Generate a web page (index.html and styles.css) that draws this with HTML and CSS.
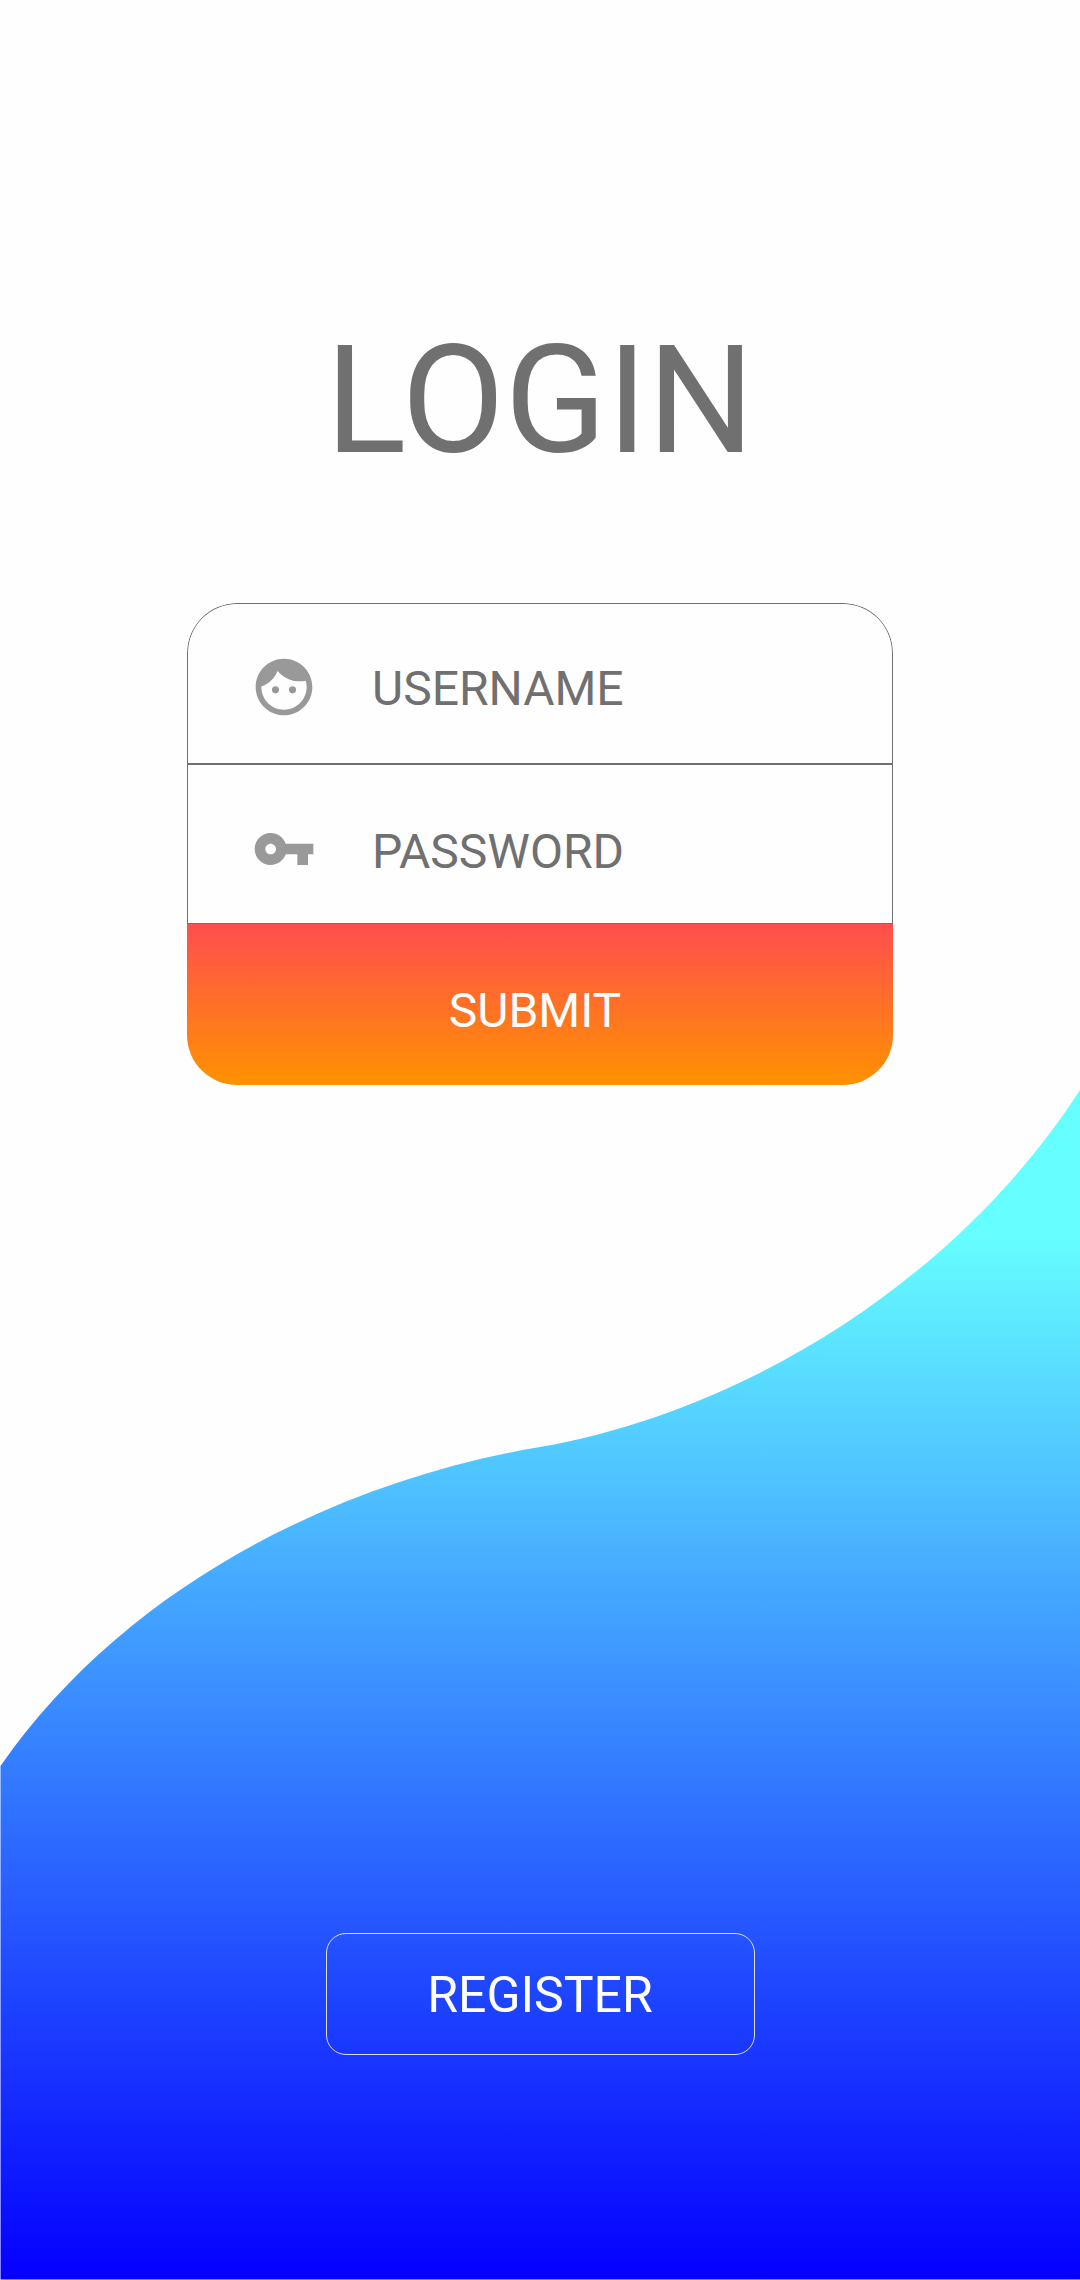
FILE: index.html
```html
<!DOCTYPE html>
<html lang="en">
<head>
  <meta charset="utf-8">
  <meta name="viewport" content="width=device-width, initial-scale=1">
  <title>Login</title>
  <link rel="stylesheet" href="styles.css">
</head>
<body>
  <main class="page">
    <svg class="wave" viewBox="0 0 1080 1190" preserveAspectRatio="none" aria-hidden="true">
      <defs>
        <linearGradient id="sea" gradientUnits="userSpaceOnUse" x1="0" y1="140" x2="0" y2="1188">
          <stop offset="0" stop-color="#66ffff"/>
          <stop offset="1" stop-color="#0400ff"/>
        </linearGradient>
      </defs>
      <path fill="url(#sea)" d="M.5 676C125 497 335 392 540 357C750 320 960 186 1080 0V1189.500H.5Z"/>
    </svg>

    <h1 class="title">LOGIN</h1>

    <form class="card">
      <label class="field field-user">
        <svg class="icon" viewBox="0 0 24 24" aria-hidden="true">
          <path d="M10.25 13a1.25 1.25 0 1 1-2.5 0 1.25 1.25 0 0 1 2.5 0zM15 11.75a1.25 1.25 0 1 0 0 2.5 1.25 1.25 0 0 0 0-2.5zM22 12c0 5.52-4.48 10-10 10S2 17.52 2 12 6.48 2 12 2s10 4.480 10 10zM20 12c0-.78-.12-1.530-.33-2.240-.7.150-1.420.240-2.170.240-3.130 0-5.920-1.440-7.760-3.690C8.690 8.870 6.600 10.880 4 11.860c.010.040 0 .090 0 .140 0 4.410 3.590 8 8 8s8-3.590 8-8z"/>
        </svg>
        <input class="input" type="text" name="username" placeholder="USERNAME" aria-label="Username">
      </label>
      <label class="field field-pass">
        <svg class="icon icon-key" viewBox="0 0 24 24" aria-hidden="true">
          <path d="M12.650 10C11.830 7.670 9.610 6 7 6c-3.310 0-6 2.690-6 6s2.690 6 6 6c2.610 0 4.830-1.670 5.650-4H17v4h4v-4h2v-4H12.650zM7 14c-1.100 0-2-.9-2-2s.9-2 2-2 2 .9 2 2-.9 2-2 2z"/>
        </svg>
        <input class="input" type="password" name="password" placeholder="PASSWORD" aria-label="Password">
      </label>
      <button class="submit" type="submit">SUBMIT</button>
    </form>

    <button class="register" type="button">REGISTER</button>
  </main>
</body>
</html>
```

FILE: styles.css
```css
* {
  box-sizing: border-box;
}

body {
  margin: 0;
  background: #fefefe;
  color: #707070;
  font-family: Roboto, sans-serif;
}

.page {
  position: relative;
  display: flex;
  flex-direction: column;
  align-items: center;
  min-height: 100vh;
  padding: 313px 24px 225px;
}

.wave {
  position: absolute;
  bottom: 0;
  left: 0;
  z-index: -1;
  width: 100%;
  aspect-ratio: 1080 / 1190;
}

.title {
  margin: 0 0 114px;
  font-size: 150px;
  font-weight: 400;
  line-height: 176px;
}

.card {
  display: flex;
  flex-direction: column;
  width: 100%;
  max-width: 706px;
  border-radius: 50px;
  overflow: hidden;
}

.field {
  display: flex;
  align-items: center;
  gap: 54px;
  padding: 0 62px;
  border: 1px solid #707070;
}

.field-user {
  height: 162px;
  padding-top: 6px;
  border-bottom-width: 2px;
  border-radius: 50px 50px 0 0;
}

.field-pass {
  height: 159px;
  padding-top: 10px;
  border-top: 0;
}

.icon {
  flex: none;
  width: 68px;
  height: 68px;
  fill: #999;
}

.icon-key {
  padding: 2px;
}

.input {
  flex: 1;
  min-width: 0;
  padding: 5px 0 0;
  border: 0;
  outline: 0;
  background: none;
  color: inherit;
  font: 48px/56px Roboto, sans-serif;
}

.input::placeholder {
  color: #707070;
  opacity: 1;
}

.submit {
  height: 161px;
  padding: 12px 10px 0 0;
  border: 0;
  background: linear-gradient(#ff4e4e, #ff9200);
  color: #fff;
  font: 48px/56px Roboto, sans-serif;
}

.register {
  width: 100%;
  max-width: 429px;
  height: 122px;
  margin-top: auto;
  padding: 2px 0 0;
  border: 1px solid #ddd;
  border-radius: 20px;
  background: none;
  color: #fff;
  font: 50px/58px Roboto, sans-serif;
}
```
